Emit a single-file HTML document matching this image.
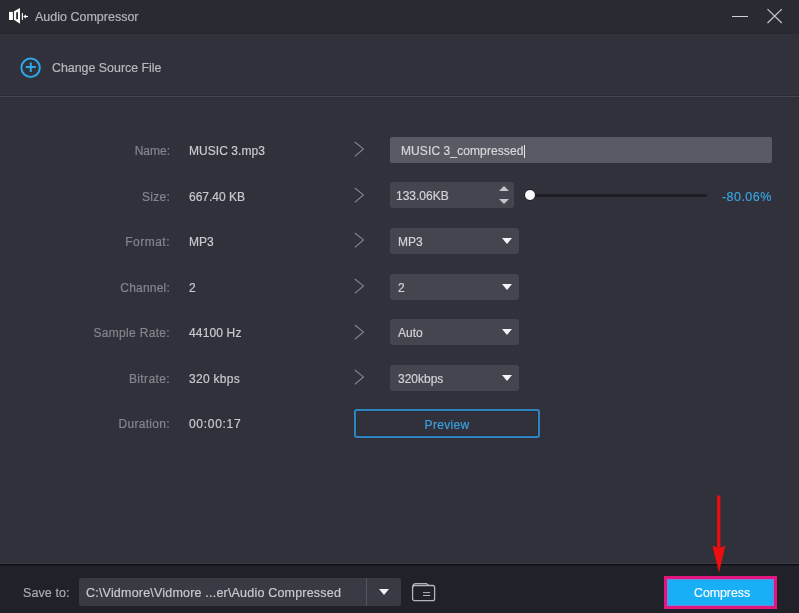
<!DOCTYPE html>
<html><head><meta charset="utf-8">
<style>
*{margin:0;padding:0;box-sizing:border-box}
html,body{width:799px;height:613px;overflow:hidden;background:#31313c;font-family:"Liberation Sans",sans-serif;font-size:12px}
.abs{position:absolute}
#title{left:0;top:0;width:799px;height:34px;background:#2a2a33;border-bottom:1px solid #27272f}
#main{left:0;top:34px;width:799px;height:529px;background:#31313c}
#div1{left:0;top:95px;width:799px;height:1px;background:#2b2b35}
#div2{left:0;top:96px;width:799px;height:1px;background:#474751;box-shadow:0 1px 0 #2d2d37}
#bline1{left:0;top:563px;width:799px;height:1px;background:#3b3b46}
#bline2{left:0;top:564px;width:799px;height:2px;background:#0f0f15;border-bottom:1px solid #16161c}
#bottom{left:0;top:566px;width:799px;height:47px;background:#21212a;border-top:1px solid #25252c}
.t{position:absolute;white-space:nowrap;line-height:14px;letter-spacing:0.3px;will-change:transform;-webkit-text-stroke:0.2px currentColor}
.lbl{color:#85858e;text-align:right;width:120px;left:50px}
.val{color:#c9c9ce;left:189px}
.chev{position:absolute;left:354px;width:11px;height:17px}
.box{position:absolute;background:#45454f;border-radius:3px}
.dd{left:390px;width:129px;height:25.5px}
.dd .txt{will-change:transform;-webkit-text-stroke:0.2px currentColor;position:absolute;left:8px;top:7px;line-height:14px;color:#d2d2d6;white-space:nowrap;letter-spacing:0px}
.tri{position:absolute;right:7px;top:10px;width:0;height:0;border-left:5px solid transparent;border-right:5px solid transparent;border-top:6px solid #f4f4f6}
</style></head><body>
<div id="title" class="abs"></div>
<div id="main" class="abs"></div>
<div id="div1" class="abs"></div>
<div id="div2" class="abs"></div>
<div id="bline1" class="abs"></div>
<div id="bline2" class="abs"></div>
<div id="bottom" class="abs"></div>

<!-- title icon -->
<svg class="abs" style="left:0;top:0" width="40" height="35" viewBox="0 0 40 35">
  <rect x="9" y="11.9" width="3.9" height="8.1" fill="#fff"/>
  <path d="M14 11.3 L20 8 L20 23.8 L14 19.8 Z M16.2 12.2 L16.2 19.3 L18 19.3 L18 12.2 Z" fill="#fff" fill-rule="evenodd"/>
  <rect x="21.8" y="13" width="1.1" height="6.9" fill="#fff"/>
  <path d="M23.2 16.5 L25.9 14.6 L25.9 18.4 Z" fill="#fff"/>
  <rect x="25" y="15.95" width="3" height="1.1" fill="#fff"/>
</svg>
<div class="t" style="left:35px;top:10px;color:#b4b4bc;font-size:12.5px;letter-spacing:0">Audio Compressor</div>
<!-- min / close -->
<div class="abs" style="left:732px;top:16px;width:16px;height:1px;background:#d0d0d5"></div>
<svg class="abs" style="left:765px;top:7px" width="19" height="18" viewBox="0 0 19 18">
  <path d="M2.5 2.1 L16.8 16 M16.8 2.1 L2.5 16" stroke="#c4c4ca" stroke-width="1.25"/>
</svg>

<!-- change source -->
<svg class="abs" style="left:18px;top:55px" width="26" height="26" viewBox="0 0 26 26">
  <circle cx="12.6" cy="12.75" r="9.2" fill="none" stroke="#2ea7e8" stroke-width="2"/>
  <path d="M7.8 12 H17.8 M12.8 7.5 V17" stroke="#2ea7e8" stroke-width="2"/>
</svg>
<div class="t" style="left:52px;top:61px;color:#b8b8bf;font-size:12.4px;letter-spacing:0">Change Source File</div>

<!-- rows -->
<div class="t lbl" style="top:144px;letter-spacing:0px">Name:</div>
<div class="t val" style="top:144px;letter-spacing:0.05px">MUSIC 3.mp3</div>
<div class="t lbl" style="top:190px;letter-spacing:0.25px">Size:</div>
<div class="t val" style="top:190px;letter-spacing:0px">667.40 KB</div>
<div class="t lbl" style="top:235px;letter-spacing:0.5px">Format:</div>
<div class="t val" style="top:235px;letter-spacing:0px">MP3</div>
<div class="t lbl" style="top:281px;letter-spacing:0.2px">Channel:</div>
<div class="t val" style="top:281px;letter-spacing:0px">2</div>
<div class="t lbl" style="top:326px;letter-spacing:0.32px">Sample Rate:</div>
<div class="t val" style="top:326px;letter-spacing:0.15px">44100 Hz</div>
<div class="t lbl" style="top:372px;letter-spacing:0.38px">Bitrate:</div>
<div class="t val" style="top:372px;letter-spacing:0.3px">320 kbps</div>
<div class="t lbl" style="top:417px;letter-spacing:0.32px">Duration:</div>
<div class="t val" style="top:417px;letter-spacing:0.7px">00:00:17</div>

<!-- chevrons -->
<svg class="chev" style="top:141px" viewBox="0 0 11 17"><path d="M0.8 1 L9.4 7.9 L0.8 15.4" fill="none" stroke="#85858e" stroke-width="1.15"/></svg>
<svg class="chev" style="top:187px" viewBox="0 0 11 17"><path d="M0.8 1 L9.4 7.9 L0.8 15.4" fill="none" stroke="#85858e" stroke-width="1.15"/></svg>
<svg class="chev" style="top:232px" viewBox="0 0 11 17"><path d="M0.8 1 L9.4 7.9 L0.8 15.4" fill="none" stroke="#85858e" stroke-width="1.15"/></svg>
<svg class="chev" style="top:278px" viewBox="0 0 11 17"><path d="M0.8 1 L9.4 7.9 L0.8 15.4" fill="none" stroke="#85858e" stroke-width="1.15"/></svg>
<svg class="chev" style="top:324px" viewBox="0 0 11 17"><path d="M0.8 1 L9.4 7.9 L0.8 15.4" fill="none" stroke="#85858e" stroke-width="1.15"/></svg>
<svg class="chev" style="top:369px" viewBox="0 0 11 17"><path d="M0.8 1 L9.4 7.9 L0.8 15.4" fill="none" stroke="#85858e" stroke-width="1.15"/></svg>

<!-- name input -->
<div class="box" style="left:390px;top:136.5px;width:382px;height:26px;background:#5a5a64;border-radius:2px"></div>
<div class="t" style="left:401px;top:144px;color:#d6d6da;letter-spacing:0.1px">MUSIC 3_compressed<span style="display:inline-block;width:1px;height:13px;background:#e6e6e6;vertical-align:-3px;margin-left:0"></span></div>

<!-- size spinner -->
<div class="box" style="left:390px;top:182px;width:124px;height:26px"></div>
<div class="t" style="left:396px;top:189px;color:#d2d2d6;letter-spacing:0">133.06KB</div>
<div class="abs" style="left:498.5px;top:186px;width:0;height:0;border-left:5px solid transparent;border-right:5px solid transparent;border-bottom:5.5px solid #c4c4ca"></div>
<div class="abs" style="left:498.5px;top:198.8px;width:0;height:0;border-left:5px solid transparent;border-right:5px solid transparent;border-top:5.7px solid #c4c4ca"></div>
<!-- slider -->
<div class="abs" style="left:530px;top:194px;width:177px;height:3px;background:#1e1e27;border-radius:1px"></div>
<div class="abs" style="left:524px;top:189px;width:12px;height:12px;border-radius:50%;background:#fbfbfd;border:1px solid #15151b"></div>
<div class="t" style="left:722px;top:190px;color:#38a2e0;font-size:12.5px;letter-spacing:0.45px">-80.06%</div>

<!-- dropdowns -->
<div class="box dd" style="top:228px"><div class="txt">MP3</div><div class="tri"></div></div>
<div class="box dd" style="top:274px"><div class="txt">2</div><div class="tri"></div></div>
<div class="box dd" style="top:319px"><div class="txt">Auto</div><div class="tri"></div></div>
<div class="box dd" style="top:365px"><div class="txt">320kbps</div><div class="tri"></div></div>

<!-- preview -->
<div class="abs" style="left:354px;top:409px;width:186px;height:29px;border:2px solid #3084bf;border-radius:3px;box-shadow:inset 0 0 0 1px #262c3c"></div>
<div class="t" style="left:354px;width:186px;text-align:center;top:418px;color:#3aa2e2">Preview</div>

<!-- bottom -->
<div class="t" style="left:23px;top:586px;color:#a9a9b0;font-size:12.5px;letter-spacing:0.1px">Save to:</div>
<div class="box" style="left:79px;top:578px;width:322px;height:28px;background:#3a3a44;border-radius:2px"></div>
<div class="abs" style="left:366px;top:578px;width:1px;height:28px;background:#55555e"></div>
<div class="t" style="left:86px;top:586px;color:#c9c9ce;font-size:12.5px;letter-spacing:0.2px">C:\Vidmore\Vidmore ...er\Audio Compressed</div>
<div class="abs" style="left:379px;top:589px;width:0;height:0;border-left:5.5px solid transparent;border-right:5.5px solid transparent;border-top:6.5px solid #f4f4f6"></div>
<svg class="abs" style="left:410px;top:581px" width="28" height="22" viewBox="0 0 28 22">
  <rect x="2.6" y="4.5" width="22" height="15.2" rx="2" fill="none" stroke="#b4b4ba" stroke-width="1.3"/>
  <path d="M2.6 7 Q2.6 2.6 6 2.6 H16.5 L18.5 4.5" fill="none" stroke="#b4b4ba" stroke-width="1.3"/>
  <path d="M13 11.6 H20.2 M13 14.5 H20.2" stroke="#b4b4ba" stroke-width="1"/>
</svg>

<!-- compress -->
<div class="abs" style="left:664px;top:576px;width:113px;height:33px;background:#e3157f"></div>
<div class="abs" style="left:667px;top:579px;width:107px;height:27px;background:#18aff6;box-shadow:inset 0 0 0 1px #6f86de"></div>
<div class="t" style="left:694px;top:586px;color:#f8fbff;font-size:12.3px;letter-spacing:0px">Compress</div>

<!-- red arrow -->
<svg class="abs" style="left:705px;top:490px" width="28" height="90" viewBox="0 0 28 90">
  <rect x="12.1" y="5.6" width="3.3" height="52" fill="#ee0e0e"/>
  <path d="M7.4 55.8 L13.8 58 L20.3 55.8 L14 82.8 Z" fill="#ee0e0e"/>
</svg>
</body></html>
